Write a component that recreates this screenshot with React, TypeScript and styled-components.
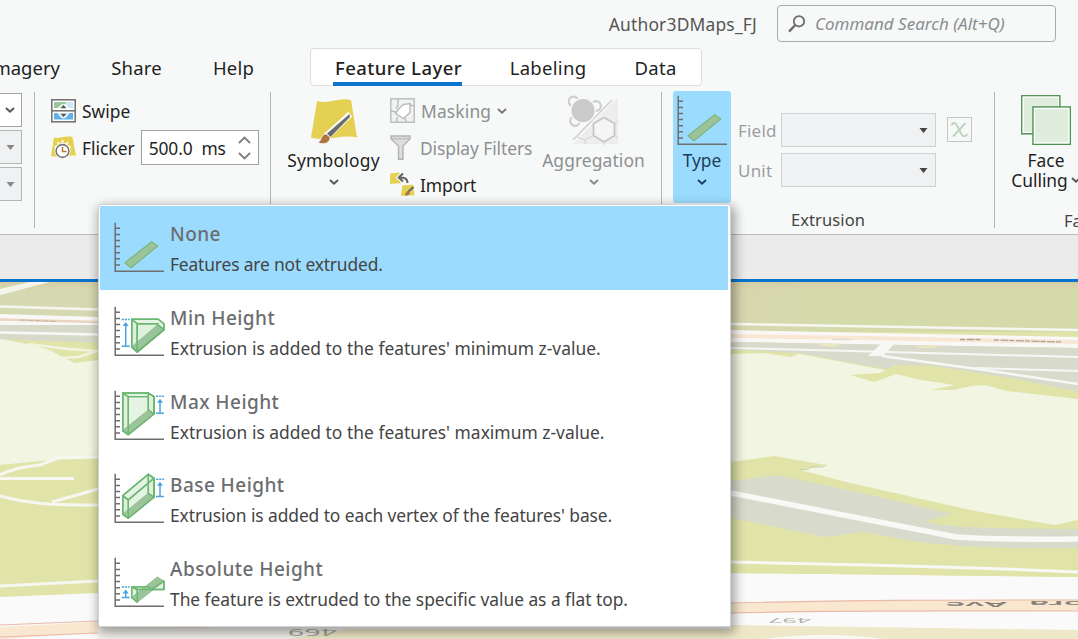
import React from 'react';
import styled, { createGlobalStyle } from 'styled-components';

const GlobalStyle = createGlobalStyle`
  *, *::before, *::after { box-sizing: border-box; }
  body { margin: 0; font-family: "Noto Sans", "Open Sans", sans-serif; background: #f7f9f9; }
  svg { display: block; flex: none; }
`;

const Window = styled.div`
  position: relative;
  display: flex;
  flex-direction: column;
  width: 1078px;
  height: 639px;
  overflow: hidden;
  background: #f7f9f8;
  color: #1f1f1f;
`;

const Text = styled.span<{ $size?: number; $track?: number; $color?: string; $weight?: number }>`
  font-size: ${p => p.$size ?? 17.4}px;
  letter-spacing: ${p => p.$track ?? 0}px;
  color: ${p => p.$color ?? '#1f1f1f'};
  font-weight: ${p => p.$weight ?? 400};
  line-height: 20px;
  white-space: pre;
`;

/* ---------- title bar ---------- */

const TitleBar = styled.header`
  display: flex;
  align-items: center;
  justify-content: flex-end;
  height: 48px;
  padding: 0 22px 2px 0;
  gap: 20px;
`;

const Account = styled(Text)`
  margin-top: 2px;
`;

const SearchBox = styled.div`
  display: flex;
  align-items: center;
  gap: 9px;
  width: 279px;
  height: 37px;
  padding: 1px 0 0 10px;
  border: 1.5px solid #a9abab;
  border-radius: 4px;
`;

const Placeholder = styled(Text)`
  font-style: italic;
`;

/* ---------- tabs ---------- */

const TabBar = styled.nav`
  display: flex;
  height: 39px;
`;

const Tab = styled.div<{ $w: number }>`
  display: flex;
  align-items: center;
  justify-content: center;
  width: ${p => p.$w}px;
  height: 39px;
  flex: none;
`;

const FirstTab = styled(Tab)`
  justify-content: flex-end;
`;

const ContextTabs = styled.div`
  display: flex;
  width: 392px;
  height: 38px;
  margin-left: 56px;
  padding-left: 22px;
  background: #fff;
  border: 1px solid #dcdedd;
  border-radius: 4px;
`;

const ActiveTab = styled(Tab)`
  height: 37px;
  border-bottom: 4px solid #0a74cc;
  padding: 4px 0 0 2px;
`;

const ContextTab = styled(Tab)<{ $ml: number }>`
  margin-left: ${p => p.$ml}px;
  height: 38px;
`;

/* ---------- ribbon ---------- */

const Ribbon = styled.div`
  display: flex;
  height: 148px;
  border-bottom: 1px solid #b9bbbf;
  padding-top: 5px;
`;

const Group = styled.section<{ $w: number; $pl?: number }>`
  display: flex;
  width: ${p => p.$w}px;
  height: 136px;
  padding: 0 0 0 ${p => p.$pl ?? 0}px;
  border-right: 1.5px solid #b5b7b7;
  flex: none;
`;

const Stack = styled.div<{ $gap?: number; $ml?: number; $w?: number; $pt?: number }>`
  display: flex;
  flex-direction: column;
  gap: ${p => p.$gap ?? 0}px;
  margin-left: ${p => p.$ml ?? 0}px;
  padding-top: ${p => p.$pt ?? 0}px;
  width: ${p => (p.$w ? p.$w + 'px' : 'auto')};
  flex: none;
`;

const Row = styled.div<{ $h?: number; $gap?: number }>`
  display: flex;
  align-items: center;
  height: ${p => p.$h ?? 37}px;
  gap: ${p => p.$gap ?? 6}px;
`;

const Combo = styled.div<{ $w: number; $off?: boolean; $open?: boolean; $dim?: boolean }>`
  display: flex;
  align-items: center;
  justify-content: flex-end;
  width: ${p => p.$w}px;
  height: 34px;
  padding-right: ${p => (p.$open ? 6 : 7)}px;
  background: ${p => (p.$off || p.$dim ? '#f0f1f2' : '#fff')};
  border: 1.5px solid ${p => (p.$off ? '#cfd1d3' : p.$dim ? '#b4b6b6' : '#a3a5a5')};
  border-left-width: ${p => (p.$open ? 0 : 1.5)}px;
`;

const Spinner = styled.div`
  display: flex;
  align-items: center;
  justify-content: space-between;
  width: 118px;
  height: 35px;
  padding: 0 7px 0 7px;
  background: #fff;
  border: 1.5px solid #a0a2a2;
`;

const BigButton = styled.div<{ $w: number; $on?: boolean }>`
  display: flex;
  flex-direction: column;
  align-items: center;
  width: ${p => p.$w}px;
  height: 112px;
  margin-top: -1px;
  padding-top: 4px;
  border-radius: 3px;
  background: ${p => (p.$on ? '#9bdcfe' : 'transparent')};
  flex: none;
`;

const BigIcon = styled.div<{ $drop?: number }>`
  display: flex;
  justify-content: center;
  height: 55px;
  padding-top: ${p => p.$drop ?? 0}px;
`;

const ChevronSlot = styled.div`
  display: flex;
  align-items: center;
  height: 24px;
`;

const GroupTitle = styled.div<{ $w: number }>`
  display: flex;
  justify-content: center;
  width: ${p => p.$w}px;
  margin-top: 22px;
`;

const Fields = styled.div`
  display: flex;
  padding-top: 21px;
  gap: 11px;
`;

const ExpressionButton = styled.div`
  display: flex;
  align-items: center;
  justify-content: center;
  width: 25px;
  height: 25px;
  margin-top: 4px;
  border: 1.5px solid #c3c6c4;
`;

/* ---------- view area ---------- */

const ViewStrip = styled.div`
  height: 44px;
  background: #ebebeb;
`;

const MapView = styled.div`
  height: 360px;
  border-top: 3px solid #0a74cc;
`;

/* ---------- drop-down gallery ---------- */

const Menu = styled.div`
  position: absolute;
  left: 98px;
  top: 204px;
  width: 633px;
  height: 423px;
  padding: 1px 2px 0 1px;
  background: #fff;
  border: 1px solid #d0d2d6;
  border-radius: 3px 3px 2px 2px;
  box-shadow: 2px 4px 11px 2px rgba(0, 0, 0, 0.36);
`;

const MenuItem = styled.div<{ $on?: boolean }>`
  display: flex;
  gap: 6px;
  height: 83.7px;
  padding: 16.200px 0 0 14px;
  background: ${p => (p.$on ? '#9bdcfe' : 'transparent')};
`;

const MenuText = styled.div`
  display: flex;
  flex-direction: column;
  gap: 10px;
  padding-top: 2px;
`;

/* ---------- icons ---------- */

const Chevron = ({ color = '#555' }: { color?: string }) => (
  <svg width="10" height="6" viewBox="0 0 10 6">
    <path d="M1 1l4 3.600L9 1" fill="none" stroke={color} strokeWidth="1.900" />
  </svg>
);

const Caret = ({ color = '#555' }: { color?: string }) => (
  <svg width="9" height="5" viewBox="0 0 9 5">
    <path d="M0.500 0h8L4.500 5z" fill={color} />
  </svg>
);

const SpinArrows = () => (
  <svg width="13" height="26" viewBox="0 0 13 26">
    <path d="M1 8l5.500-5.500L12 8M1 18l5.500 5.500L12 18" fill="none" stroke="#7d7d7d" strokeWidth="1.800" />
  </svg>
);

const SearchIcon = () => (
  <svg width="18" height="18" viewBox="0 0 18 18">
    <circle cx="11" cy="6.300" r="5.200" fill="none" stroke="#6b6b6b" strokeWidth="1.800" />
    <path d="M7.300 10L1 16.600" stroke="#6b6b6b" strokeWidth="2.400" />
  </svg>
);

const SwipeIcon = () => (
  <svg width="25" height="24" viewBox="0 0 25 24">
    <rect x="0.800" y="0.800" width="23.400" height="22" fill="#fff" stroke="#6e6e6e" strokeWidth="1.500" />
    <path d="M3 3h13l-5 6H3z" fill="#9cc79d" />
    <path d="M16 3h6v6h-8z" fill="#cfe6f7" />
    <path d="M3 14h19v6.500H3z" fill="#5fb0e8" />
    <path d="M6 9.500c2-1 3-4.500 6.500-4.500s4.500 3.500 6.500 4.500zM6 14h13c-2 1-3 5.500-6.500 5.500S8 15 6 14z" fill="#fff" opacity=".8" />
    <path d="M1 11.800h23" stroke="#6e6e6e" strokeWidth="1.500" />
    <path d="M12.500 6l3 3.200h-6zM12.500 18l3-3.200h-6z" fill="#555" />
  </svg>
);

const FlickerIcon = () => (
  <svg width="25" height="25" viewBox="0 0 25 25">
    <path d="M3 2.500c6 1.500 10-2 18.500-.5l3.500 19c-8-1.500-16 2-25 0z" fill="#e6d050" />
    <path d="M11.500 5v5M6.500 7l3 4M17 7l-3 4M3.500 11.500l5 2M20 11.500l-5 2" stroke="#fff" strokeWidth="1.600" />
    <circle cx="11.500" cy="16" r="8" fill="#fff" />
    <circle cx="11.500" cy="16" r="6.400" fill="#fff" stroke="#777" strokeWidth="1.600" />
    <path d="M11.500 12v4.500h4" fill="none" stroke="#b5763f" strokeWidth="1.500" />
  </svg>
);

const SymbologyIcon = () => (
  <svg width="48" height="46" viewBox="0 0 48 46">
    <path d="M7 2c13 3.500 21-4 34-1l6 37.500C32 35 16 43 1 38.500z" fill="#e4d053" />
    <g transform="translate(0 1)">
      <path d="M38 14L16 34l3 3L40 16.500z" fill="#fff" stroke="#fff" strokeWidth="3" />
      <path d="M39.500 14L17 33.500l3.500 3.500L40 17z" fill="#6c6c6c" />
      <path d="M16.500 34c-6 0-4 5.500-8.500 8.500 6 3.500 13-.5 12-5.500z" fill="#ad7743" stroke="#fff" strokeWidth=".8" />
    </g>
  </svg>
);

const MaskingIcon = () => (
  <svg width="25" height="25" viewBox="0 0 25 25">
    <g fill="none" stroke="#b9bbbb" strokeWidth="1.400">
      <rect x=".8" y=".8" width="23.400" height="23.400" fill="#f1f2f2" />
      <path d="M8 1v6l-2 4M1 13l5 1M7 24v-5M16 24l-1-4M24 8l-4-1" />
      <path d="M13.500 6.500l6.500-1 0 9-6.500 6-8-5 4-5.500z" fill="#fff" />
    </g>
  </svg>
);

const FunnelIcon = () => (
  <svg width="25" height="25" viewBox="0 0 25 25">
    <path d="M1 1h19v3l-7 7v13.300H8.500V11L1 4z" fill="#ddd" stroke="#b3b3b3" strokeWidth="1.400" />
    <path d="M1 3.800h19" stroke="#b3b3b3" />
  </svg>
);

const ImportIcon = () => (
  <svg width="26" height="25" viewBox="0 0 26 25">
    <path d="M.5 1c4 1 6-.8 9.500 0l1 10.500c-4-1-7.500 1-12 0z" fill="#e4d053" />
    <path d="M12.500 13c4 1 7-1 11 0l.8 10.500c-4-1-8 .8-13.300 0z" fill="#e4d053" />
    <path d="M17.500 11c0-4-2-5.500-7-5.500M13 1.500L8.500 5.500 13 9.500" fill="none" stroke="#fff" strokeWidth="4" />
    <path d="M17.500 11c0-4-2-5.500-7-5.500M13 1.500L8.800 5.500 13 9.500" fill="none" stroke="#666" strokeWidth="2.200" />
    <path d="M23.500 15L18 20" stroke="#666" strokeWidth="2" />
    <path d="M18.500 19c-3 0-2 2.500-4 4 2.500 1 5.500 0 5.500-2.500z" fill="#ad7743" />
  </svg>
);

const AggregationIcon = () => (
  <svg width="51" height="50" viewBox="0 0 51 50">
    <path d="M50 2v47H5z" fill="#ededed" />
    <path d="M44 5L5 45" stroke="#cfcfcf" strokeWidth="1.500" />
    <g fill="none" stroke="#cdcdcd" strokeWidth="2.200">
      <circle cx="5.500" cy="6.500" r="4.800" /><circle cx="28" cy="11" r="4.800" /><circle cx="7" cy="26" r="4.800" />
    </g>
    <circle cx="15" cy="15.500" r="12.300" fill="#cacaca" stroke="#f7f9f8" strokeWidth="1.500" />
    <path d="M36 22.500l10.500 6v12L36 47l-10.500-6.500v-12z" fill="#f5f5f5" stroke="#c4c4c4" strokeWidth="1.700" />
    <path d="M25.500 40.500L17 45l-8-3M17 45v4M46.500 28.500l4-2.500M46.500 40.500l4 2.500M36 47v3" fill="none" stroke="#d3d3d3" />
  </svg>
);

const ExpressionIcon = () => (
  <svg width="19" height="18" viewBox="0 0 19 18">
    <path d="M1.500 4.500c1-3 4-3.500 5.500 0l4 8c1.500 3.500 4.500 3.500 6.500.5M15.500 2L3 15.500" fill="none" stroke="#bcd5bd" strokeWidth="1.900" />
  </svg>
);

const FaceIcon = () => (
  <svg width="50" height="50" viewBox="0 0 50 50">
    <g fill="#deeddc" stroke="#4f9152" strokeWidth="1.500">
      <rect x=".8" y=".8" width="38" height="38" />
      <rect x="12" y="12" width="37.300" height="37.300" />
    </g>
    <g fill="none" stroke="#fff" strokeWidth="1.200">
      <path d="M37.500 11V2.200H2.200v35.300H11" />
      <rect x="13.400" y="13.400" width="34.500" height="34.500" />
    </g>
  </svg>
);

type Kind = 'none' | 'min' | 'max' | 'base' | 'absolute';

const shapes: Record<Kind, { pale: string[]; dark: string; blue?: [number, number, number] }> = {
  none: { pale: [], dark: '11,40.7 37.7,19.7 43.7,24 17,45.7' },
  min: {
    pale: ['17.7,13.3 44.3,13.3 50,17.7 50,23.6 23.3,46 17.7,41', '23.3,17.7 44,17.7 44,19 50,23.6 23.3,46', '17.7,13.3 23.3,17.7 23.3,46 17.7,41'],
    dark: '17.7,41 43.5,19 50,23.6 23.3,46',
    blue: [11.7, 13.6, 40.3],
  },
  max: {
    pale: ['8.7,3 34.3,3 40,6.6 40,24 14.3,44.6 8.7,40.6', '8.7,3 14.3,6.6 14.3,44.6 8.7,40.6', '34.3,3 40,6.6 40,24 34.3,20', '14.3,6.6 34.3,6.6'],
    dark: '8.7,40.6 34.3,20 40,24 14.3,44.6',
    blue: [46, 6.3, 23.3],
  },
  base: {
    pale: ['8.7,22.6 34.3,1.2 40,5.2 40,24.2 14.3,45.2 8.7,41.2', '8.7,22.6 14.3,26.9 14.3,45.2 8.7,41.2', '34.3,1.2 40,5.2 40,24.2 34.3,20.2', '14.3,26.9 40,5.2'],
    dark: '8.7,41.2 34.3,20.2 40,24.2 14.3,45.2',
    blue: [46, 6.2, 23.6],
  },
  absolute: {
    pale: ['17.7,29.9 35,29.9 37,32.5 23.3,32.5', '17.7,29.9 23.3,32.5 23.3,45.2 17.7,40.5', '50,24.2 50,32.5 37,32.5'],
    dark: '17.7,40.5 43.3,19.9 50,24.2 23.3,45.2',
    blue: [11.7, 29.9, 40.5],
  },
};

const ExtrusionIcon = ({ kind }: { kind: Kind }) => {
  const s = shapes[kind];
  return (
    <svg width="50" height="50" viewBox="0 0 50 50" overflow="visible">
      <path
        d="M1.200 .7v48.600H50M1 6.300h5M1 12.400h5M1 18.500h5M1 24.600h5M1 30.700h5M1 36.800h5M1 42.900h5"
        fill="none" stroke="#6e6e6e" strokeWidth="1.500"
      />
      <g strokeLinejoin="round" stroke="#6cb772" strokeWidth="1.400">
        {s.pale.map(p => <polygon key={p} points={p} fill="#dcefdb" fillOpacity=".75" />)}
        <polygon
          points={s.dark} fill="#9cc49a"
          strokeWidth={kind === 'none' ? 1.3 : 0.8}
          stroke={kind === 'none' ? '#80b57e' : '#7dba80'}
        />
        {s.pale.map(p => <polygon key={p} points={p} fill="none" />)}
      </g>
      {s.blue && (
        <g stroke="#4ba3e0" strokeWidth="1.500" fill="none">
          <path d={`M${s.blue[0] - 4} ${s.blue[1]}h8`} strokeDasharray="2.200 .9" />
          <path d={`M${s.blue[0] - 4} ${s.blue[2]}h8M${s.blue[0]} ${s.blue[2]}V${s.blue[1] + 4}`} />
          <path d={`M${s.blue[0]} ${s.blue[1] + 2.5}l3 4h-6z`} fill="#4ba3e0" stroke="none" />
        </g>
      )}
    </svg>
  );
};

/* ---------- scene ---------- */

const Scene = () => (
  <svg width="1078" height="357" viewBox="0 282 1078 357">
    <defs>
      <linearGradient id="hill" x1="0" x2="1">
        <stop offset="0" stopColor="#d5d9b2" />
        <stop offset=".68" stopColor="#d7d6ae" />
        <stop offset=".76" stopColor="#d5daab" />
        <stop offset="1" stopColor="#d5daab" />
      </linearGradient>
      <linearGradient id="haze" x1="0" x2="0" y1="0" y2="1">
        <stop offset="0" stopColor="#d6cca6" />
        <stop offset="1" stopColor="#d6cca6" stopOpacity="0" />
      </linearGradient>
    </defs>
    <rect y="282" width="1078" height="357" fill="#e0e4a8" />
    <rect y="282" width="1078" height="50" fill="url(#hill)" />
    <rect y="282" width="1078" height="8" fill="url(#haze)" />

    {/* left side */}
    <path d="M0 289L30 282h20L0 295z" fill="#f4f6ea" />
    <path d="M0 306.500L98 309.500" stroke="#f5f6ee" strokeWidth="2.500" />
    <path d="M0 314L98 317v8L0 325z" fill="#f8f8f6" />
    <path d="M0 319.500L98 322" stroke="#ecd5c0" strokeWidth="2.500" />
    <path d="M20 320l38 1.500" stroke="#c4b3a0" strokeWidth="1" strokeDasharray="6 1.500" />
    <path d="M0 325h98v18L0 339z" fill="#d8dac9" />
    <path d="M0 332.500L98 334.500" stroke="#f8f8f8" strokeWidth="2.500" />
    <path d="M0 339c30 5 50 9 60 17l15 7 23-3v95L40 461 0 465z" fill="#f2f5e1" />
    <path d="M28 344l40 5 30 2M60 358l18-1 20-6" fill="none" stroke="#f2f3e0" strokeWidth="2.500" />
    <path d="M0 475c12-6 22-8 40-10l18-7 40-1" fill="none" stroke="#f6f7f0" strokeWidth="3" />
    <path d="M0 478.500h74M0 496c30 8 50 9 98 9M52 502l46-13" fill="none" stroke="#f6f7f0" strokeWidth="3" />
    <path d="M0 586l98-5" stroke="#f6f7f0" strokeWidth="3" />

    {/* right side road corridor */}
    <path d="M731 324L1078 330" stroke="#f7f7f2" strokeWidth="2.500" />
    <path d="M731 330L1078 337v11L731 342z" fill="#f9f8f6" />
    <path d="M731 336c120 2 220 3 347 6" fill="none" stroke="#f9e6d3" strokeWidth="4" />
    <path d="M731 342L1078 348v50L880 368l-80-15-69-2z" fill="#d8dacb" />
    <path d="M731 348l120 3 227 6M975 368l103 3" fill="none" stroke="#f7f7f5" strokeWidth="2" />
    <path d="M884 341h13l-14 15h-15z" fill="#f7f7f5" />
    <path d="M882 356L970 368l108 16" fill="none" stroke="#f7f7f5" strokeWidth="2.500" />
    <path d="M818 345l12-2 12 2-11 2zM912 347l20-2 8 2-13 1.500z" fill="#ece7c2" />
    <path d="M960 339.500h21M994 340l68 2" stroke="#a9a59b" strokeWidth="1.300" strokeDasharray="5 1.500 8 1" />
    <path d="M832 339.500h20" stroke="#dedcd6" strokeWidth="1.500" />

    {/* large building footprint */}
    <path d="M731 353l32-1 37 2 90 17 188 28v131H731z" fill="#f2f5e1" />
    <path d="M731 350l34 1 34 3-8 3-27-4-33 1z" fill="#e0e4a8" />
    <path d="M850 375l30-2 15-8 40 1 87 14 56 12v7l-72-8-20-6-15 1-18 4h-22l24-5-34-5-25-6-22 8z" fill="#e0e4a8" />

    {/* lower terrain */}
    <path d="M731 462l43-6 52 9-26 5 50 13 125 28 80 14 23-5v119H731z" fill="#e0e4a8" />
    <path d="M800 470l9-1 2-2 11 0 4-2" fill="none" stroke="#c9cbaa" />
    <path d="M731 481l46-6 80 17 96 22-25 6c0 6 45 9 150 9v19c-70 1-120-1-165-7l-50-9-37 5-95-19z" fill="#d8dacb" />
    <path d="M731 493l225 44q45 3 122 2" fill="none" stroke="#f8f8f7" strokeWidth="5.500" />

    {/* avenue */}
    <path d="M0 597l98-4 633-20 347 4v62H0z" fill="#fafafa" />
    <path d="M731 560h347v17l-347-4z" fill="#e0e4a8" />
    <path d="M731 562c130 3 220 4 347 10" fill="none" stroke="#f8f8f7" strokeWidth="3" />
    <path d="M0 627l98-5 200-14 433-5c120-3 200-3 347-3v11c-150-1-230-1-347 2l-433 10L98 633l-98 6z" fill="#f9e7d0" />
    <path d="M0 625l98-4M0 637l98-4M731 603c120-3 200-3 347-3M731 613c120-3 200-2 347-2" fill="none" stroke="#eab9a8" strokeWidth="1.200" />
    <path d="M98 639v-10h633v-4l347 5v9z" fill="#efe8c8" />
    <path d="M98 627l250 2-60 10H98z" fill="#f5f4ef" />
    <path d="M764 639q60-8 120 0z" fill="#faf9f4" />

    <g fontFamily="Noto Sans, sans-serif" fill="#858179">
      <text transform="translate(1007 601.500) rotate(180) scale(2.850 .6)" fontSize="12" fontWeight="600">Ave</text>
      <text transform="translate(1085 601) rotate(180) scale(2.900 .6)" fontSize="12" fontWeight="600">ora</text>
      <text transform="translate(811 617.500) rotate(180) scale(2.500 .75)" fontSize="10" fill="#b4b4ad">497</text>
      <text transform="translate(337 629) rotate(180) scale(2.600 .75)" fontSize="11" fill="#a8a498">469</text>
    </g>
  </svg>
);

const grey = '#8d8f92';

const items: { kind: Kind; title: string; text: string; track: number }[] = [
  { kind: 'none', title: 'None', text: 'Features are not extruded.', track: -0.16 },
  { kind: 'min', title: 'Min Height', text: "Extrusion is added to the features' minimum z-value.", track: 0.02 },
  { kind: 'max', title: 'Max Height', text: "Extrusion is added to the features' maximum z-value.", track: 0.02 },
  { kind: 'base', title: 'Base Height', text: "Extrusion is added to each vertex of the features' base.", track: -0.08 },
  { kind: 'absolute', title: 'Absolute Height', text: 'The feature is extruded to the specific value as a flat top.', track: -0.04 },
];

export default function App() {
  return (
    <Window>
      <GlobalStyle />
      <TitleBar>
        <Account $color="#555" $track={0.2}>Author3DMaps_FJ</Account>
        <SearchBox>
          <SearchIcon />
          <Placeholder $size={17} $color="#8a8d90">Command Search (Alt+Q)</Placeholder>
        </SearchBox>
      </TitleBar>

      <TabBar>
        <FirstTab $w={60}><Text $size={18.5}>Imagery</Text></FirstTab>
        <Tab $w={153}><Text $size={18.5} $track={0.2}>Share</Text></Tab>
        <Tab $w={41}><Text $size={18.5} $track={0.2}>Help</Text></Tab>
        <ContextTabs>
          <ActiveTab $w={129}><Text $size={18.5} $weight={500} $track={0.45}>Feature Layer</Text></ActiveTab>
          <ContextTab $w={78} $ml={47}><Text $size={18.5} $track={0.3}>Labeling</Text></ContextTab>
          <ContextTab $w={43} $ml={47}><Text $size={18.5} $track={0.3}>Data</Text></ContextTab>
        </ContextTabs>
      </TabBar>

      <Ribbon>
        <Group $w={35}>
          <Stack $gap={3} $pt={1}>
            <Combo $w={22} $open><Chevron /></Combo>
            <Combo $w={22} $open $dim><Caret color="#888" /></Combo>
            <Combo $w={22} $open $dim><Caret color="#888" /></Combo>
          </Stack>
        </Group>

        <Group $w={236} $pl={16}>
          <Stack>
            <Row><SwipeIcon /><Text>Swipe</Text></Row>
            <Row>
              <FlickerIcon />
              <Text>Flicker</Text>
              <Spinner><Text $track={-0.1}>500.0  ms</Text><SpinArrows /></Spinner>
            </Row>
          </Stack>
        </Group>

        <Group $w={391} $pl={14}>
          <BigButton $w={97}>
            <BigIcon $drop={4}><SymbologyIcon /></BigIcon>
            <Text $track={0.25}>Symbology</Text>
            <ChevronSlot><Chevron /></ChevronSlot>
          </BigButton>
          <Stack $ml={8} $w={152}>
            <Row><MaskingIcon /><Text $color={grey} $track={0.15}>Masking</Text><Chevron color="#777" /></Row>
            <Row $gap={5}><FunnelIcon /><Text $color={grey} $track={-0.08}>Display Filters</Text></Row>
            <Row $gap={4}><ImportIcon /><Text $track={-0.1}>Import</Text></Row>
          </Stack>
          <BigButton $w={103}>
            <BigIcon><AggregationIcon /></BigIcon>
            <Text $color={grey} $track={0.1}>Aggregation</Text>
            <ChevronSlot><Chevron color="#888" /></ChevronSlot>
          </BigButton>
        </Group>

        <Group $w={333} $pl={11}>
          <BigButton $w={58} $on>
            <BigIcon><ExtrusionIcon kind="none" /></BigIcon>
            <Text $color="#1d3d5c">Type</Text>
            <ChevronSlot><Chevron color="#1d3d5c" /></ChevronSlot>
          </BigButton>
          <Stack $ml={7}>
            <Fields>
              <Stack $gap={6} $w={32}>
                <Row $h={35}><Text $size={17} $color="#9b9ea1" $track={0.2}>Field</Text></Row>
                <Row $h={34}><Text $size={17} $color="#9b9ea1" $track={0.2}>Unit</Text></Row>
              </Stack>
              <Stack $gap={6}>
                <Combo $w={155} $off><Caret color="#444" /></Combo>
                <Combo $w={155} $off><Caret color="#444" /></Combo>
              </Stack>
              <ExpressionButton><ExpressionIcon /></ExpressionButton>
            </Fields>
            <GroupTitle $w={180}><Text $size={16.5} $color="#444" $track={0.1}>Extrusion</Text></GroupTitle>
          </Stack>
        </Group>

        <Stack $ml={16}>
          <BigButton $w={70}>
            <BigIcon><FaceIcon /></BigIcon>
            <Text>Face</Text>
            <Row $h={20} $gap={3}><Text>Culling</Text><Chevron /></Row>
          </BigButton>
          <Row $h={20}><Stack $ml={53} $pt={15}><Text $size={16.5} $color="#444">Face</Text></Stack></Row>
        </Stack>
      </Ribbon>

      <ViewStrip />
      <MapView><Scene /></MapView>

      <Menu>
        {items.map((it, i) => (
          <MenuItem key={it.kind} $on={i === 0}>
            <ExtrusionIcon kind={it.kind} />
            <MenuText>
              <Text $size={19} $weight={500} $color="#6b6d70" $track={0.45}>{it.title}</Text>
              <Text $color="#444" $track={it.track}>{it.text}</Text>
            </MenuText>
          </MenuItem>
        ))}
      </Menu>
    </Window>
  );
}
